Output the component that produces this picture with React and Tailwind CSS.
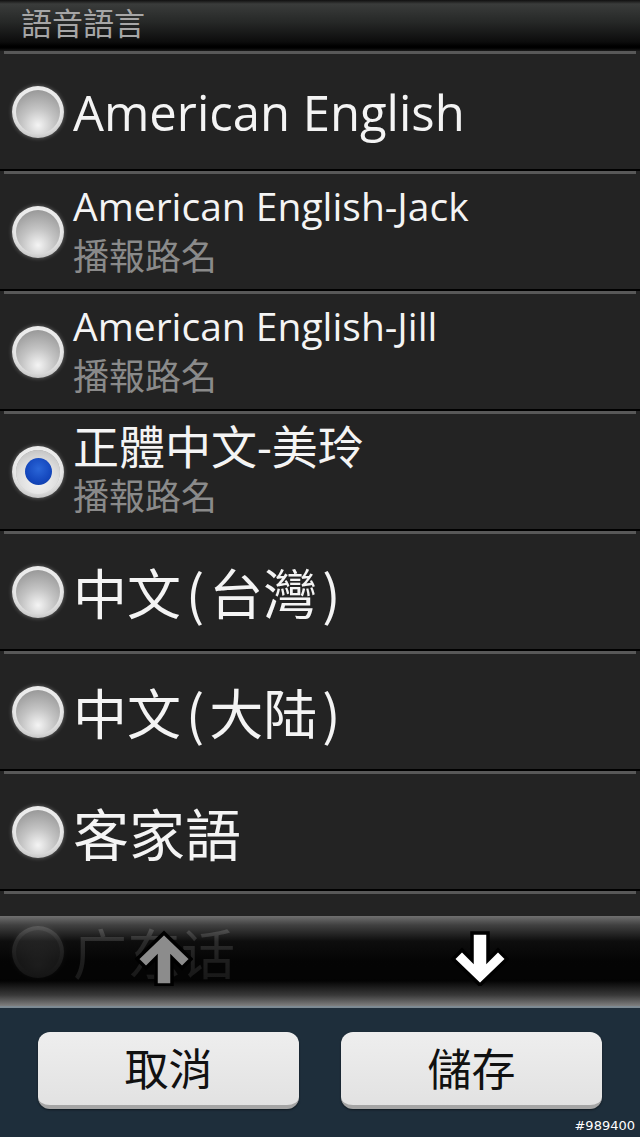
import React from "react";

const FONT = { fontFamily: '"Open Sans", "Noto Sans", "Noto Sans CJK TC", sans-serif' };
const FONT_CJK = { fontFamily: '"Noto Sans CJK TC", "Open Sans", sans-serif' };
const FONT_SC = { fontFamily: '"Noto Sans CJK SC", "Open Sans", sans-serif' };

function Radio({ checked }) {
  return (
    <div className="w-[52px] h-[52px] rounded-full shrink-0 flex items-center justify-center bg-[radial-gradient(circle_at_50%_40%,#ffffff_0%,#e6e6e6_60%,#9a9a9a_100%)] shadow-[0_0_4px_rgba(255,255,255,0.35)]">
      <div className="w-[44px] h-[44px] rounded-full flex items-center justify-center bg-[radial-gradient(circle_at_50%_80%,#f4f4f4_0%,#c4c4c4_40%,#8a8a8a_100%)]">
        {checked && (
          <div className="w-[44px] h-[44px] rounded-full flex items-center justify-center bg-[radial-gradient(circle_at_50%_70%,#f5f5f5_0%,#dcdcdc_55%,#b5b5b5_100%)]">
            <div className="w-[27px] h-[27px] rounded-full bg-[radial-gradient(circle_at_50%_40%,#2a66d8_0%,#1447bd_60%,#0d3a9e_100%)]" />
          </div>
        )}
      </div>
    </div>
  );
}

function Row({ title, sub, checked, titleClass, font, faded }) {
  return (
    <div className="flex flex-col">
      <div className="h-[3px] mx-1 bg-[#585858]" />
      <div className={"h-[115px] flex items-center pl-[12px] gap-[9px] " + (faded ? "opacity-60" : "")}>
        <Radio checked={checked} />
        <div className="flex flex-col">
          <div className={"text-[#f4f4f4] whitespace-nowrap " + titleClass} style={font || FONT}>
            {title}
          </div>
          {sub && (
            <div className="text-[#8a8a8a] text-[36px] leading-[52px] whitespace-nowrap" style={FONT}>
              {sub}
            </div>
          )}
        </div>
      </div>
      <div className="h-[2px] bg-black" />
    </div>
  );
}

function DownArrow({ fill }) {
  return (
    <svg width="58" height="56" viewBox="-3 -3 58 56">
      <path
        d="M18 0 L34 0 L34 27 L44 17 L53 26 L26 52 L-1 26 L8 17 L18 27 Z"
        fill={fill}
        stroke="#000"
        strokeWidth="3.5"
        strokeLinejoin="miter"
      />
    </svg>
  );
}

function UpArrow({ fill }) {
  return (
    <svg width="58" height="56" viewBox="-3 -3 58 56">
      <path
        d="M18 52 L34 52 L34 25 L44 35 L53 26 L26 0 L-1 26 L8 35 L18 25 Z"
        fill={fill}
        stroke="#000"
        strokeWidth="3.5"
        strokeLinejoin="miter"
      />
    </svg>
  );
}

function Paren({ children }) {
  return <span className="px-[5px]">{children}</span>;
}

export default function App() {
  const rows = [
    { title: "American English", titleClass: "text-[49px] leading-[60px]" },
    { title: "American English-Jack", sub: "播報路名", titleClass: "text-[39px] leading-[50px]" },
    { title: "American English-Jill", sub: "播報路名", titleClass: "text-[39px] leading-[50px]" },
    { title: "正體中文-美玲", sub: "播報路名", checked: true, titleClass: "text-[46px] leading-[50px]" },
    {
      title: (
        <>
          中文<Paren>(</Paren>台灣<Paren>)</Paren>
        </>
      ),
      titleClass: "text-[54px] leading-[64px]",
      font: FONT_CJK,
    },
    {
      title: (
        <>
          中文<Paren>(</Paren>大陆<Paren>)</Paren>
        </>
      ),
      titleClass: "text-[54px] leading-[64px]",
      font: FONT_CJK,
    },
    { title: "客家語", titleClass: "text-[56px] leading-[64px]", font: FONT_CJK },
    { title: "广东话", titleClass: "text-[54px] leading-[64px]", font: FONT_SC },
  ];
  return (
    <div className="w-[640px] h-[1137px] flex flex-col bg-[#232323] overflow-hidden" style={FONT}>
      <div className="h-[51px] shrink-0 flex flex-col bg-[linear-gradient(to_bottom,#101010_0px,#3a3c3b_4px,#262827_22px,#0c0c0c_42px,#000000_46px,#000000_48px,#1a1a1a_51px)]">
        <div className="pl-[21px] pt-[5px] text-[31px] leading-[36px] text-[#a6a6a6]">語音語言</div>
      </div>
      <div className="relative flex-1 overflow-hidden">
        <div className="flex flex-col">
          {rows.map((r, i) => (
            <Row key={i} {...r} />
          ))}
        </div>
        <div className="absolute left-0 right-0 bottom-0 h-[90px] grid grid-cols-2 items-center bg-[linear-gradient(to_bottom,rgba(125,125,125,0.85)_0%,rgba(70,70,70,0.85)_10%,rgba(10,10,10,0.86)_28%,rgba(0,0,0,0.88)_50%,rgba(0,0,0,0.9)_72%,rgba(60,60,60,0.9)_88%,rgba(135,135,135,0.92)_100%)]">
          <div className="flex justify-center pl-[8px] pb-[6px]">
            <UpArrow fill="#8c8c8c" />
          </div>
          <div className="flex justify-center pb-[6px]">
            <DownArrow fill="#ffffff" />
          </div>
        </div>
      </div>
      <div className="h-[131px] shrink-0 flex flex-col bg-[#1e2e3b] border-t-2 border-[#7d8a93]">
        <div className="flex justify-between px-[38px] pt-[24px]">
          <button className="w-[261px] h-[77px] rounded-[12px] bg-[linear-gradient(to_bottom,#eeeeee,#e2e2e2)] border-b-[4px] border-[#a5a5a5] shadow-[0_1px_2px_rgba(0,0,0,0.5)] flex items-center justify-center text-[44px] text-[#111] leading-none">
            取消
          </button>
          <button className="w-[261px] h-[77px] rounded-[12px] bg-[linear-gradient(to_bottom,#eeeeee,#e2e2e2)] border-b-[4px] border-[#a5a5a5] shadow-[0_1px_2px_rgba(0,0,0,0.5)] flex items-center justify-center text-[44px] text-[#111] leading-none">
            儲存
          </button>
        </div>
        <div className="flex justify-end pr-[5px] pt-[9px] text-[13px] leading-[16px] text-white" style={{ fontFamily: '"DejaVu Sans", sans-serif' }}>
          #989400
        </div>
      </div>
    </div>
  );
}
